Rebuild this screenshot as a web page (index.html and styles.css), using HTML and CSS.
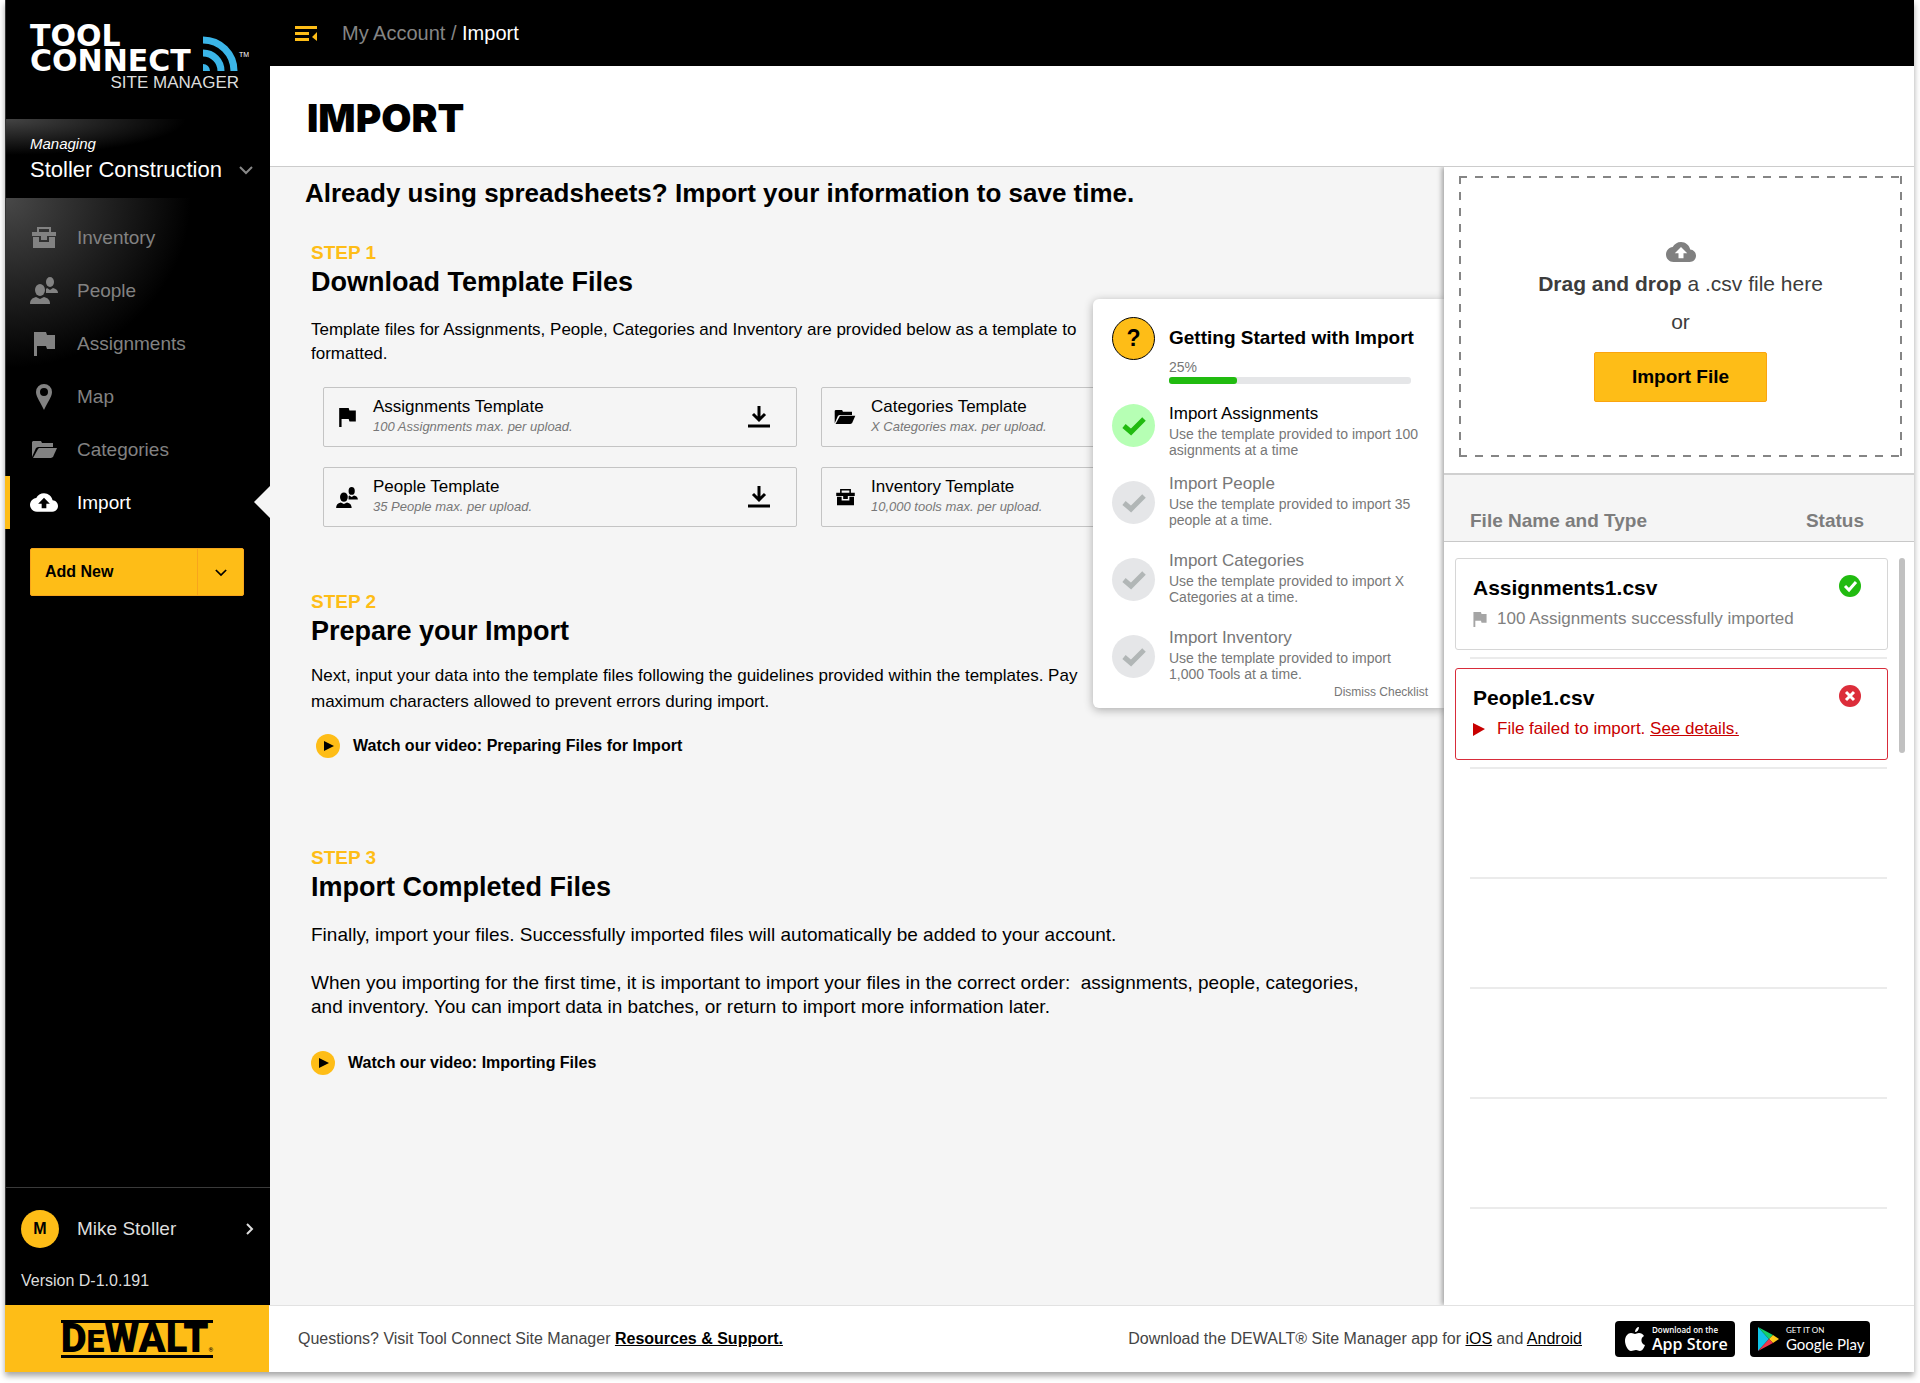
FILE: index.html
```html
<!DOCTYPE html>
<html lang="en">
<head>
    <meta charset="UTF-8">
    <meta name="viewport" content="width=device-width, initial-scale=1.0">
    <title>Import - Tool Connect Site Manager</title>
    <link rel="stylesheet" href="styles.css">
</head>
<body>
    <!-- shared icons -->
    <svg class="sprite" aria-hidden="true">
        <symbol id="icon-toolbox" viewBox="0 0 24 22">
            <path fill-rule="evenodd" d="M5 0h14v5h5v4h-9v4H9V9H0V5h5zM7 2v3h10V2zM1 10h6v5h10v-5h6v11H1z"/>
        </symbol>
        <symbol id="icon-people" viewBox="0 0 28 27">
            <ellipse cx="10" cy="13" rx="5" ry="6"/>
            <path d="M0 27c0-4 2-6 6-7l4 2 4-2c4 1 6 3 6 7z"/>
            <ellipse cx="20" cy="5" rx="4" ry="5"/>
            <path d="M16 16v-4l1-1 3 2 3-2c3 1 5 2 5 5z"/>
        </symbol>
        <symbol id="icon-flag" viewBox="0 0 21 24">
            <path d="M0 0h12l1 3h8v14h-8l-1-3H3v10H0z"/>
        </symbol>
        <symbol id="icon-pin" viewBox="0 0 16 26">
            <path fill-rule="evenodd" d="M8 0a8 8 0 0 1 8 8c0 5-5 11-8 18C5 19 0 13 0 8a8 8 0 0 1 8-8zm0 4a4 4 0 1 0 0 8 4 4 0 0 0 0-8z"/>
        </symbol>
        <symbol id="icon-folder" viewBox="0 0 25 17">
            <path d="M0 16V1l1-1h8l1 2h11v4H6L4 7z"/>
            <path d="M1 17L6 8l1-1h18l-4 9-2 1z"/>
        </symbol>
        <symbol id="icon-cloud" viewBox="0 4 24 16">
            <path fill-rule="evenodd" d="M19.35 10.04C18.67 6.59 15.64 4 12 4 9.11 4 6.6 5.64 5.35 8.04 2.34 8.36 0 10.91 0 14c0 3.31 2.69 6 6 6h13c2.76 0 5-2.24 5-5 0-2.64-2.05-4.78-4.65-4.96zM14 13v4h-4v-4H7l5-5 5 5z"/>
        </symbol>
        <symbol id="icon-download" viewBox="0 0 22 22">
            <path d="M11 0v13M5 8l6 6 6-6M0 20h22" fill="none" stroke="currentColor" stroke-width="3"/>
        </symbol>
        <symbol id="icon-check" viewBox="0 0 24 20">
            <path d="M2 10l7 6L22 3" fill="none" stroke="currentColor" stroke-width="5"/>
        </symbol>
        <symbol id="icon-chevron" viewBox="0 0 14 9">
            <path d="M1 1l6 6 6-6" fill="none" stroke="currentColor" stroke-width="2"/>
        </symbol>
    </svg>

    <div class="app">
        <div class="workspace">
            <aside class="sidebar">
                <div class="logo">
                    <div class="logo-row">
                        <div class="logo-name">TOOL<br>CONNECT</div>
                        <svg class="logo-waves" viewBox="0 0 35 35" aria-hidden="true">
                            <path d="M0 28a7 7 0 0 1 7 7H0z"/>
                            <path d="M0 17a18 18 0 0 1 18 18M0 4a31 31 0 0 1 31 31" fill="none" stroke="#3bb5e8" stroke-width="7"/>
                        </svg>
                        <span class="logo-tm">TM</span>
                    </div>
                    <div class="logo-sub">SITE MANAGER</div>
                </div>
                <button class="account">
                    <span class="account-label">Managing</span>
                    <span class="account-name">Stoller Construction
                        <svg class="chevron"><use href="#icon-chevron"/></svg>
                    </span>
                </button>
                <nav class="nav">
                    <a href="#" class="nav-item"><span class="nav-icon"><svg width="24" height="22"><use href="#icon-toolbox"/></svg></span>Inventory</a>
                    <a href="#" class="nav-item"><span class="nav-icon"><svg width="28" height="27"><use href="#icon-people"/></svg></span>People</a>
                    <a href="#" class="nav-item"><span class="nav-icon"><svg width="21" height="24"><use href="#icon-flag"/></svg></span>Assignments</a>
                    <a href="#" class="nav-item"><span class="nav-icon"><svg width="16" height="26"><use href="#icon-pin"/></svg></span>Map</a>
                    <a href="#" class="nav-item"><span class="nav-icon"><svg width="25" height="17"><use href="#icon-folder"/></svg></span>Categories</a>
                    <a href="#" class="nav-item active"><span class="nav-icon"><svg width="28" height="19"><use href="#icon-cloud"/></svg></span>Import</a>
                </nav>
                <div class="add-new">
                    <button class="add-main">Add New</button>
                    <button class="add-more" aria-label="More options"><svg class="chevron"><use href="#icon-chevron"/></svg></button>
                </div>
                <div class="user">
                    <a href="#" class="user-row">
                        <span class="avatar">M</span>
                        <span class="user-name">Mike Stoller</span>
                        <svg class="user-arrow" viewBox="0 0 8 13"><path d="M1 1l5 5-5 5" fill="none" stroke="currentColor" stroke-width="2"/></svg>
                    </a>
                    <div class="version">Version D-1.0.191</div>
                </div>
            </aside>

            <div class="main">
                <header class="topbar">
                    <button class="menu-btn" aria-label="Collapse menu">
                        <svg width="22" height="15" viewBox="0 0 22 15"><path d="M0 0h22v3H0zM0 6h14v3H0zM0 12h14v3H0zM22 6v9l-5-4z"/></svg>
                    </button>
                    <div class="breadcrumb"><a href="#">My Account</a> / <span>Import</span></div>
                </header>
                <div class="page-title"><h1>IMPORT</h1></div>

                <div class="columns">
                    <main class="content">
                        <h2>Already using spreadsheets? Import your information to save time.</h2>

                        <section class="step">
                            <div class="step-label">STEP 1</div>
                            <h3>Download Template Files</h3>
                            <p>Template files for Assignments, People, Categories and Inventory are provided below as a template to<br>formatted.</p>
                            <div class="templates">
                                <a href="#" class="template">
                                    <span class="template-icon"><svg width="19" height="19"><use href="#icon-flag"/></svg></span>
                                    <span class="template-text"><b>Assignments Template</b><i>100 Assignments max. per upload.</i></span>
                                    <svg class="download"><use href="#icon-download"/></svg>
                                </a>
                                <a href="#" class="template">
                                    <span class="template-icon"><svg width="22" height="14"><use href="#icon-folder"/></svg></span>
                                    <span class="template-text"><b>Categories Template</b><i>X Categories max. per upload.</i></span>
                                    <svg class="download"><use href="#icon-download"/></svg>
                                </a>
                                <a href="#" class="template">
                                    <span class="template-icon"><svg width="24" height="21"><use href="#icon-people"/></svg></span>
                                    <span class="template-text"><b>People Template</b><i>35 People max. per upload.</i></span>
                                    <svg class="download"><use href="#icon-download"/></svg>
                                </a>
                                <a href="#" class="template">
                                    <span class="template-icon"><svg width="21" height="17"><use href="#icon-toolbox"/></svg></span>
                                    <span class="template-text"><b>Inventory Template</b><i>10,000 tools max. per upload.</i></span>
                                    <svg class="download"><use href="#icon-download"/></svg>
                                </a>
                            </div>
                        </section>

                        <section class="step">
                            <div class="step-label">STEP 2</div>
                            <h3>Prepare your Import</h3>
                            <p class="loose">Next, input your data into the template files following the guidelines provided within the templates. Pay<br>maximum characters allowed to prevent errors during import.</p>
                            <a href="#" class="video indent">
                                <svg width="24" height="24" viewBox="0 0 24 24"><circle cx="12" cy="12" r="12" fill="#febd17"/><path d="M8 7l10 5-10 5z"/></svg>
                                Watch our video: Preparing Files for Import
                            </a>
                        </section>

                        <section class="step large">
                            <div class="step-label">STEP 3</div>
                            <h3>Import Completed Files</h3>
                            <p>Finally, import your files. Successfully imported files will automatically be added to your account.</p>
                            <p class="next">When you importing for the first time, it is important to import your files in the correct order:&nbsp; assignments, people, categories,<br>and inventory. You can import data in batches, or return to import more information later.</p>
                            <a href="#" class="video">
                                <svg width="24" height="24" viewBox="0 0 24 24"><circle cx="12" cy="12" r="12" fill="#febd17"/><path d="M8 7l10 5-10 5z"/></svg>
                                Watch our video: Importing Files
                            </a>
                        </section>

                        <div class="checklist">
                            <div class="checklist-head">
                                <span class="help">?</span>
                                <div>
                                    <h4>Getting Started with Import</h4>
                                    <label for="progress">25%</label>
                                    <progress id="progress" value="28" max="100"></progress>
                                </div>
                            </div>
                            <ul>
                                <li class="done">
                                    <span class="tick"><svg width="24" height="20"><use href="#icon-check"/></svg></span>
                                    <div><b>Import Assignments</b><p>Use the template provided to import 100 asignments at a time</p></div>
                                </li>
                                <li>
                                    <span class="tick"><svg width="24" height="20"><use href="#icon-check"/></svg></span>
                                    <div><b>Import People</b><p>Use the template provided to import 35 people at a time.</p></div>
                                </li>
                                <li>
                                    <span class="tick"><svg width="24" height="20"><use href="#icon-check"/></svg></span>
                                    <div><b>Import Categories</b><p>Use the template provided to import X Categories at a time.</p></div>
                                </li>
                                <li>
                                    <span class="tick"><svg width="24" height="20"><use href="#icon-check"/></svg></span>
                                    <div><b>Import Inventory</b><p>Use the template provided to import 1,000 Tools at a time.</p></div>
                                </li>
                            </ul>
                            <button class="dismiss">Dismiss Checklist</button>
                        </div>
                    </main>

                    <aside class="panel">
                        <div class="drop-area">
                            <div class="dropzone">
                                <svg width="30" height="20"><use href="#icon-cloud"/></svg>
                                <p><b>Drag and drop</b> a .csv file here</p>
                                <p>or</p>
                                <button class="import-btn">Import File</button>
                            </div>
                        </div>
                        <div class="files">
                            <table>
                                <thead>
                                    <tr><th>File Name and Type</th><th>Status</th></tr>
                                </thead>
                                <tbody>
                                    <tr class="file">
                                        <td>
                                            <div class="file-name">Assignments1.csv</div>
                                            <div class="file-info"><svg width="14" height="15"><use href="#icon-flag"/></svg>100 Assignments successfully imported</div>
                                        </td>
                                        <td>
                                            <svg width="22" height="22" viewBox="0 0 22 22" role="img" aria-label="Imported"><circle cx="11" cy="11" r="11" fill="#21bb10"/><path d="M6 11l4 4 7-8" fill="none" stroke="#fff" stroke-width="3"/></svg>
                                        </td>
                                    </tr>
                                    <tr class="line"><td></td></tr>
                                    <tr class="file failed">
                                        <td>
                                            <div class="file-name">People1.csv</div>
                                            <div class="file-info"><svg width="14" height="13" viewBox="0 0 14 13"><path d="M0 0l12 6-12 7z"/></svg>File failed to import.&nbsp;<a href="#">See details.</a></div>
                                        </td>
                                        <td>
                                            <svg width="22" height="22" viewBox="0 0 22 22" role="img" aria-label="Failed"><circle cx="11" cy="11" r="11" fill="#dc2d3a"/><path d="M7 7l8 8M15 7l-8 8" stroke="#fff" stroke-width="3"/></svg>
                                        </td>
                                    </tr>
                                    <tr class="line"><td></td></tr>
                                    <tr class="line empty"><td></td></tr>
                                    <tr class="line empty"><td></td></tr>
                                    <tr class="line empty"><td></td></tr>
                                    <tr class="line empty"><td></td></tr>
                                </tbody>
                            </table>
                            <div class="scrollbar"></div>
                        </div>
                    </aside>
                </div>
            </div>
        </div>

        <footer class="footer">
            <div class="brand"><div class="brand-name">D<small>E</small>WALT<sup>®</sup></div></div>
            <p>Questions? Visit Tool Connect Site Manager <a href="#" class="strong">Resources &amp; Support.</a></p>
            <p class="apps">Download the DEWALT® Site Manager app for <a href="#">iOS</a> and <a href="#">Android</a></p>
            <a href="#" class="badge">
                <svg width="20" height="24" viewBox="0 0 20 24"><path fill="#fff" d="M14 0c0 3-2 5-4 5 0-3 2-5 4-5zM10 7c1 0 2-1 4-1s4 1 5 3c-4 2-3 8 1 9-1 3-3 6-5 6s-2-1-4-1-3 1-5 1c-3 0-6-6-6-10 0-5 3-8 6-8 2 0 3 1 4 1z"/></svg>
                <span class="apple-text"><small>Download on the</small>App Store</span>
            </a>
            <a href="#" class="badge">
                <svg width="21" height="24" viewBox="0 0 21 24"><path fill="#12c4e8" d="M0 0v24l11-12z"/><path fill="#16d06c" d="M0 0l15 8-4 4z"/><path fill="#ffc91a" d="M15 8l6 4-6 4-4-4z"/><path fill="#f0384f" d="M0 24l15-8-4-4z"/></svg>
                <span class="google-text"><small>GET IT ON</small>Google Play</span>
            </a>
        </footer>
    </div>
</body>
</html>
```
FILE: styles.css
```css
* {
    box-sizing: border-box;
}
body {
    margin: 0;
    padding: 0 6px 11px 5px;
    background: #fff;
    color: #000;
    font-family: "Liberation Sans", Arial, sans-serif;
    font-size: 17px;
}
h1, h2, h3, h4, p, ul {
    margin: 0;
    padding: 0;
}
button {
    font-family: inherit;
    border: 0;
    padding: 0;
    cursor: pointer;
}
a {
    color: inherit;
    text-decoration: none;
}
svg {
    fill: currentColor;
    flex-shrink: 0;
}
.sprite {
    position: absolute;
    width: 0;
    height: 0;
}
.app {
    min-height: calc(100vh - 11px);
    display: flex;
    flex-direction: column;
    box-shadow: 0 4px 6px rgba(0, 0, 0, 0.35);
}
.workspace {
    flex: 1;
    display: flex;
}

/* sidebar */
.sidebar {
    width: 265px;
    flex-shrink: 0;
    background: #000;
    color: #fff;
    display: flex;
    flex-direction: column;
    border-left: 1px solid #333;
}
.logo {
    height: 119px;
    padding: 23px 0 0 24px;
}
.logo-row {
    display: flex;
    align-items: flex-end;
    gap: 1px;
}
.logo-name {
    font: bold 30px/25px "DejaVu Sans", sans-serif;
    width: 172px;
}
.logo-waves {
    width: 35px;
    height: 35px;
    fill: #3bb5e8;
    margin-bottom: 2px;
}
.logo-tm {
    font-size: 7px;
    align-self: center;
    margin-top: 12px;
}
.logo-sub {
    width: 209px;
    text-align: right;
    font-size: 17px;
    line-height: 20px;
    color: #ddd;
}
.account {
    height: 79px;
    padding: 2px 17px 0 24px;
    display: flex;
    flex-direction: column;
    justify-content: center;
    align-items: stretch;
    gap: 3px;
    text-align: left;
    color: #fff;
    background: radial-gradient(ellipse 180px 36px at 0 0, #444, #000);
}
.account-label {
    font-size: 15px;
    font-style: italic;
    line-height: 18px;
}
.account-name {
    font-size: 22px;
    line-height: 28px;
    display: flex;
    align-items: center;
    justify-content: space-between;
}
.chevron {
    width: 14px;
    height: 9px;
}
.account .chevron {
    color: #888;
}
.nav {
    padding-top: 13px;
    background: radial-gradient(ellipse 185px 170px at 0 0, #484848, #000);
}
.nav-item {
    height: 53px;
    display: flex;
    align-items: center;
    font-size: 19px;
    color: #828282;
    padding-left: 20px;
    position: relative;
}
.nav-icon {
    width: 36px;
    margin-right: 15px;
    display: flex;
    justify-content: center;
}
.nav-item.active {
    color: #fff;
}
.nav-item.active::before {
    content: "";
    position: absolute;
    left: -1px;
    top: 0;
    bottom: 0;
    width: 5px;
    background: #febd17;
}
.nav-item.active::after {
    content: "";
    position: absolute;
    right: 0;
    top: 10px;
    border: 16px solid transparent;
    border-right-color: #f5f5f5;
    border-left: 0;
}
.add-new {
    margin: 19px 0 0 24px;
    width: 214px;
    height: 48px;
    display: flex;
    background: #febd17;
    border: 1px solid #f7a51c;
    border-radius: 2px;
}
.add-main {
    flex: 1;
    padding-left: 14px;
    text-align: left;
    background: none;
    font-size: 16px;
    font-weight: bold;
    color: #000;
}
.add-more {
    width: 46px;
    background: none;
    border-left: 1px solid #f7a51c;
    color: #000;
}
.add-more .chevron {
    width: 12px;
    height: 8px;
}
.user {
    margin-top: auto;
    height: 118px;
    border-top: 1px solid #3a3a3a;
    color: #ddd;
}
.user-row {
    display: flex;
    align-items: center;
    padding: 22px 16px 0 15px;
}
.avatar {
    width: 38px;
    height: 38px;
    border-radius: 50%;
    background: #febd17;
    color: #000;
    font-size: 16px;
    font-weight: bold;
    line-height: 38px;
    text-align: center;
    margin-right: 18px;
}
.user-name {
    flex: 1;
    font-size: 19px;
}
.user-arrow {
    width: 8px;
    height: 13px;
}
.version {
    padding: 23px 0 0 15px;
    font-size: 16px;
    line-height: 20px;
}

/* header */
.main {
    flex: 1;
    min-width: 0;
    display: flex;
    flex-direction: column;
}
.topbar {
    height: 66px;
    background: #000;
    display: flex;
    align-items: center;
    padding-left: 25px;
}
.menu-btn {
    background: none;
    color: #febd17;
    width: 22px;
    height: 15px;
    line-height: 0;
}
.breadcrumb {
    margin-left: 25px;
    font-size: 20px;
    color: #858585;
}
.breadcrumb span {
    color: #fff;
}
.page-title {
    height: 101px;
    padding: 28px 37px;
    border-bottom: 1px solid #ccc;
}
h1 {
    font: 900 39px/48px Inter, sans-serif;
}
.columns {
    flex: 1;
    display: flex;
}

/* steps */
.content {
    flex: 1;
    min-width: 0;
    position: relative;
    overflow: hidden;
    background: #f5f5f5;
    padding: 10px 35px 60px;
}
h2 {
    font-size: 26px;
    line-height: 32px;
    margin-bottom: 32px;
}
.step {
    padding-left: 6px;
    margin-bottom: 63px;
}
.step-label {
    color: #febd17;
    font-size: 19px;
    font-weight: bold;
    line-height: 24px;
}
h3 {
    font-size: 27px;
    line-height: 34px;
}
.step p {
    margin-top: 19px;
    line-height: 24px;
    white-space: nowrap;
}
.step p.loose {
    margin-top: 15px;
    line-height: 26px;
}
.step p.next {
    margin-top: 24px;
}
.step.large p {
    font-size: 19px;
}
.templates {
    display: grid;
    grid-template-columns: 1fr 1fr;
    gap: 20px 24px;
    max-width: 984px;
    margin-top: 21px;
    padding-left: 12px;
}
.template {
    height: 60px;
    border: 1px solid #c4c4c4;
    border-radius: 2px;
    display: flex;
    align-items: center;
    padding: 0 26px 0 9px;
}
.template-icon {
    width: 28px;
    display: flex;
    justify-content: center;
    margin-right: 12px;
}
.template-text {
    flex: 1;
}
.template-text b,
.template-text i {
    display: block;
    line-height: 20px;
}
.template-text b {
    font-size: 17px;
    font-weight: normal;
}
.template-text i {
    font-size: 13px;
    color: #777;
}
.download {
    width: 22px;
    height: 22px;
}
.video {
    display: flex;
    align-items: center;
    gap: 13px;
    margin-top: 32px;
    height: 24px;
    font-size: 16px;
    font-weight: bold;
}
.video.indent {
    margin: 19px 0 88px 5px;
}

/* getting started checklist */
.checklist {
    position: absolute;
    top: 132px;
    right: 0;
    width: 351px;
    height: 409px;
    padding: 18px 16px 0 19px;
    background: #fff;
    border-radius: 6px 0 0 6px;
    box-shadow: 0 2px 10px rgba(0, 0, 0, 0.3);
}
.checklist-head {
    display: flex;
}
.help {
    width: 43px;
    height: 43px;
    border: 1px solid #000;
    border-radius: 50%;
    background: #febd17;
    font-size: 23px;
    font-weight: bold;
    line-height: 41px;
    text-align: center;
    margin-right: 14px;
}
.checklist h4 {
    font-size: 19px;
    line-height: 24px;
    padding-top: 9px;
}
.checklist label {
    display: block;
    font-size: 14px;
    line-height: 16px;
    color: #777;
    margin-top: 9px;
}
.checklist progress {
    display: block;
    appearance: none;
    width: 242px;
    height: 7px;
    margin-top: 2px;
    border: 0;
}
.checklist progress::-webkit-progress-bar {
    background: #e5e6e8;
    border-radius: 3px;
}
.checklist progress::-webkit-progress-value {
    background: #21bb10;
    border-radius: 3px;
}
.checklist ul {
    list-style: none;
    margin-top: 20px;
}
.checklist li {
    height: 77px;
    display: flex;
    color: #777;
}
.checklist li:last-child {
    height: 49px;
}
.checklist li:not(.done) div {
    margin-top: -7px;
}
.tick {
    width: 43px;
    height: 43px;
    border-radius: 50%;
    background: #e5e6e8;
    color: #b1b6b6;
    display: flex;
    align-items: center;
    justify-content: center;
    flex-shrink: 0;
    margin-right: 14px;
}
.done .tick {
    background: #b6ffb4;
    color: #21bb10;
}
.checklist b {
    display: block;
    font-size: 17px;
    font-weight: normal;
    line-height: 20px;
    margin-bottom: 2px;
}
.done b {
    color: #000;
}
.checklist li p {
    font-size: 14px;
    line-height: 16px;
}
.dismiss {
    display: block;
    margin-left: auto;
    background: none;
    color: #777;
    font-size: 12px;
    line-height: 16px;
}

/* upload panel */
.panel {
    width: 470px;
    flex-shrink: 0;
    background: #fff;
    position: relative;
    box-shadow: -2px 0 5px rgba(0, 0, 0, 0.35);
    clip-path: inset(0 0 0 -10px);
}
.drop-area {
    padding: 9px 12px 16px 15px;
    border-bottom: 2px solid #d0d0d0;
}
.dropzone {
    height: 281px;
    padding-top: 66px;
    display: flex;
    flex-direction: column;
    align-items: center;
    color: #3c3c3c;
    font-size: 21px;
    background:
        repeating-linear-gradient(90deg, #858585 0 8px, transparent 8px 16px) 0 0 / 100% 2px no-repeat,
        repeating-linear-gradient(90deg, #858585 0 8px, transparent 8px 16px) 0 100% / 100% 2px no-repeat,
        repeating-linear-gradient(#858585 0 8px, transparent 8px 16px) 0 0 / 2px 100% no-repeat,
        repeating-linear-gradient(#858585 0 8px, transparent 8px 16px) 100% 0 / 2px 100% no-repeat;
}
.dropzone svg {
    color: #808080;
    margin-bottom: 8px;
}
.dropzone p {
    line-height: 28px;
    margin-bottom: 10px;
}
.import-btn {
    width: 173px;
    height: 50px;
    margin-top: 6px;
    background: #febd17;
    border: 1px solid #fba40f;
    border-radius: 2px;
    font-size: 19px;
    font-weight: bold;
    color: #000;
}
.files {
    position: relative;
}
.files table,
.files thead,
.files tbody,
.files td,
.files th {
    display: block;
}
.files thead tr {
    display: flex;
    justify-content: space-between;
    height: 67px;
    padding: 34px 50px 0 26px;
    background: #f5f5f5;
    border-bottom: 1px solid #c8c8c8;
}
.files th {
    padding: 0;
    color: #7d7d7d;
    font-size: 19px;
    line-height: 24px;
}
.files tbody {
    padding-top: 7px;
}
.files td {
    padding: 0;
}
.files .file {
    display: flex;
    justify-content: space-between;
    height: 92px;
    margin: 9px 26px 7px 11px;
    padding: 16px 26px 0 17px;
    border: 1px solid #d6d6d6;
    border-radius: 3px;
}
.files .failed {
    border-color: #d82c3a;
}
.file-name {
    font-size: 21px;
    font-weight: bold;
    line-height: 26px;
}
.file-info {
    display: flex;
    align-items: center;
    font-size: 17px;
    line-height: 20px;
    margin-top: 8px;
    color: #808080;
}
.file-info svg {
    margin-right: 10px;
    color: #a5a5a5;
}
.failed .file-info,
.failed .file-info svg {
    color: #c80000;
}
.file-info a {
    text-decoration: underline;
}
.files .line {
    display: block;
    height: 2px;
    margin: 0 27px 0 26px;
    background: #ebebeb;
}
.files .empty {
    margin-top: 108px;
}
.scrollbar {
    position: absolute;
    top: 83px;
    right: 9px;
    width: 6px;
    height: 195px;
    border-radius: 3px;
    background: #c1c1c1;
}

/* footer */
.footer {
    height: 67px;
    display: flex;
    align-items: center;
    background: #fff;
    color: #444;
    font-size: 16px;
    padding-right: 44px;
    border-top: 1px solid #e2e2e2;
}
.brand {
    width: 264px;
    height: 67px;
    margin: -1px 29px 0 0;
    background: #febd17;
    display: flex;
    align-items: center;
    justify-content: center;
    color: #000;
}
.brand-name {
    height: 38px;
    font: 900 40px/32px Roboto, sans-serif;
    border-top: 3px solid #000;
    border-bottom: 3px solid #000;
    white-space: nowrap;
}
.brand-name small {
    font-size: 32px;
    line-height: 0;
}
.brand-name sup {
    font-size: 6px;
    font-weight: normal;
    line-height: 0;
    vertical-align: baseline;
}
.footer p a {
    color: #000;
    text-decoration: underline;
}
.footer p .strong {
    font-weight: bold;
}
.apps {
    margin-left: auto;
    margin-right: 18px;
}
.badge {
    width: 120px;
    height: 36px;
    margin-left: 15px;
    background: #000;
    border-radius: 4px;
    color: #fff;
    display: flex;
    align-items: center;
    gap: 7px;
    padding-left: 10px;
    white-space: nowrap;
}
.badge + .badge {
    padding-left: 8px;
}
.badge small {
    display: block;
    font-size: 8px;
    line-height: 10px;
}
.apple-text {
    font: 600 16px/18px "Open Sans", sans-serif;
}
.google-text {
    font: 15px/18px Lato, sans-serif;
}
```
